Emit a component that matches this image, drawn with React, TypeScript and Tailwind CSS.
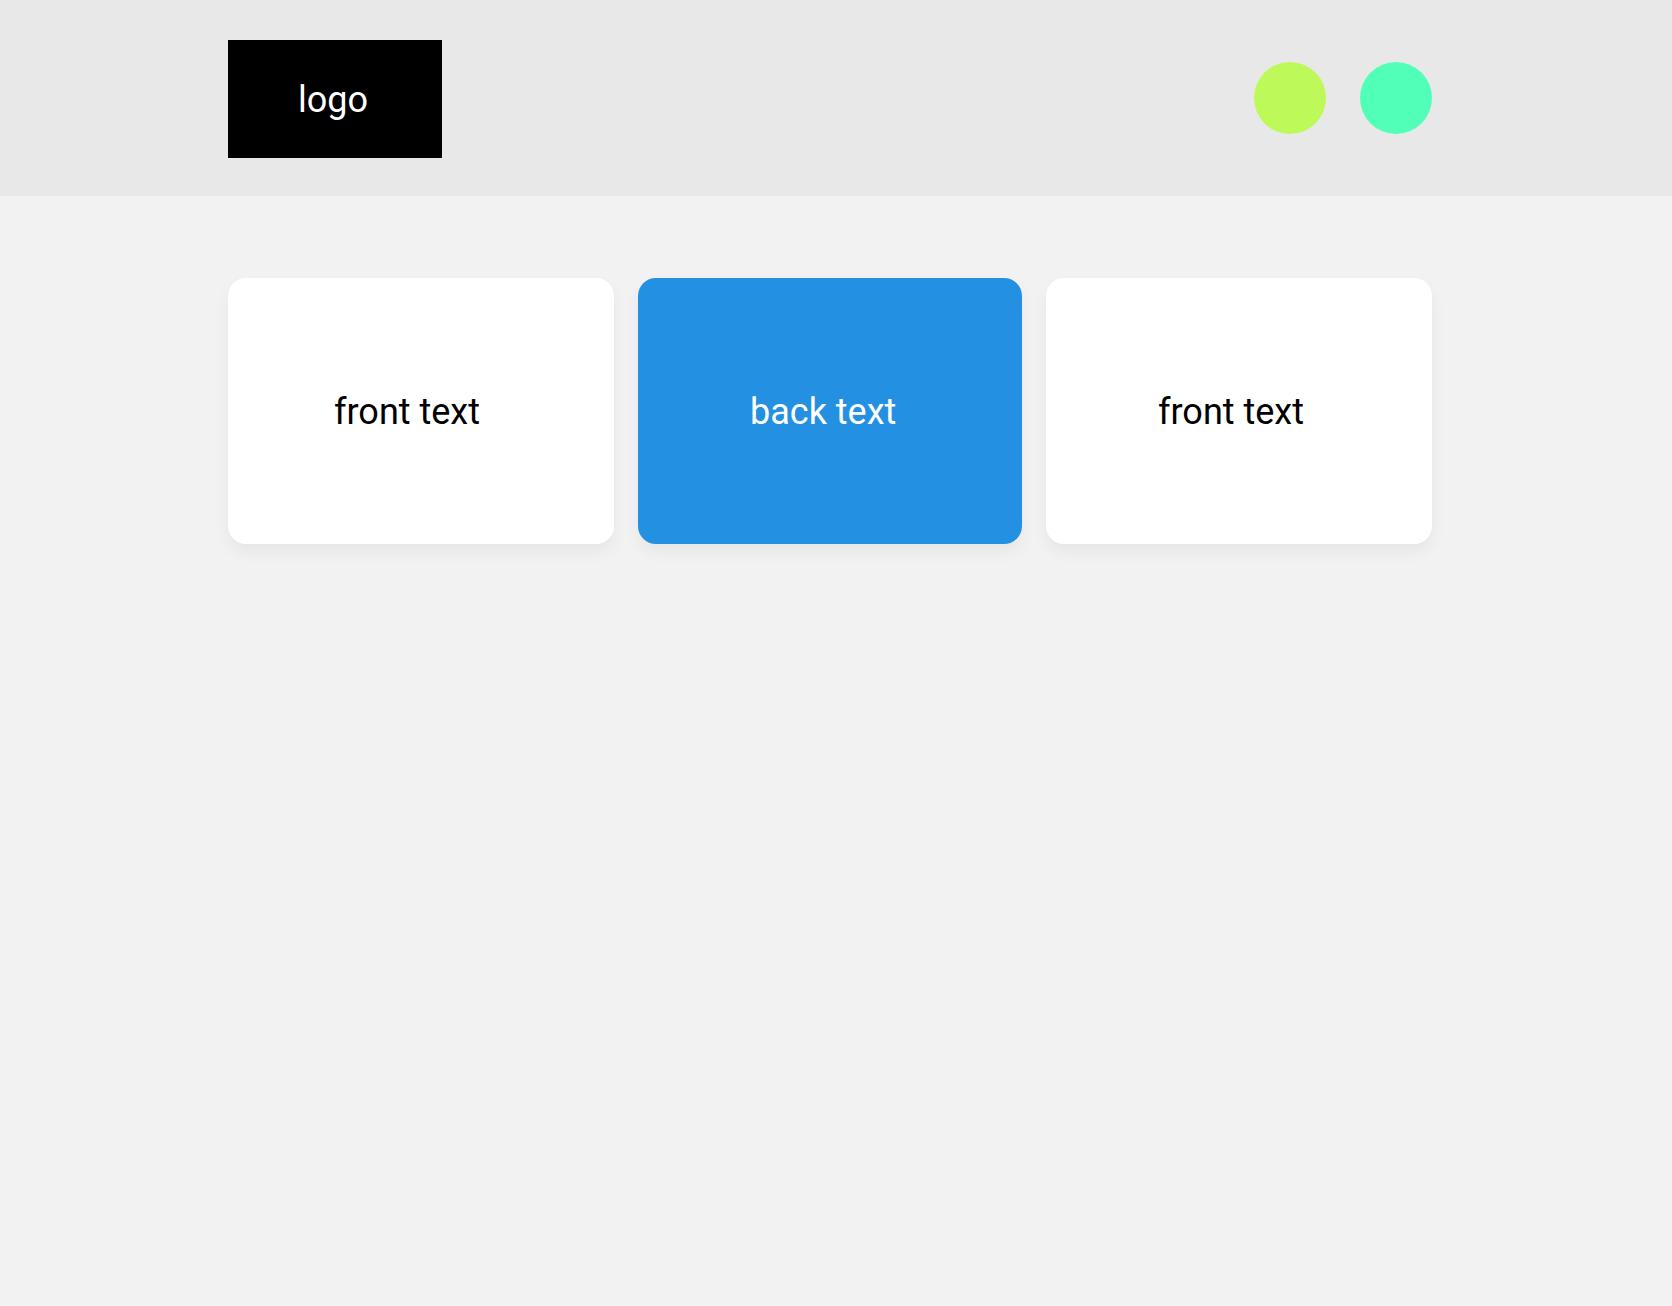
type CardProps = {
  text: string;
  className: string;
};

function Card({ text, className }: CardProps) {
  return (
    <article
      className={`flex min-h-[266px] items-center rounded-[18px] pt-0.5 shadow-[0_8px_16px_rgba(0,0,0,0.05)] ${className}`}
    >
      <p>{text}</p>
    </article>
  );
}

export default function App() {
  return (
    <div className="min-h-screen bg-[#f2f2f2] font-['Roboto',sans-serif] text-4xl text-black">
      <header className="flex items-start justify-between bg-[#e8e8e8] pt-10 pr-60 pb-[38px] pl-57">
        <a href="#" className="flex h-[118px] w-[214px] items-center bg-black pt-0.5 pl-[70px] text-white">
          logo
        </a>
        <nav className="flex gap-[34px] pt-[22px]">
          <button type="button" aria-label="Green" className="size-18 rounded-full bg-[#bdfa59]" />
          <button type="button" aria-label="Mint" className="size-18 rounded-full bg-[#52ffb8]" />
        </nav>
      </header>
      <main className="grid grid-cols-[386fr_384fr_386fr] gap-6 pt-[82px] pr-60 pb-10 pl-57">
        <Card text="front text" className="bg-white pl-[106px]" />
        <Card text="back text" className="bg-[#2490e2] pl-28 text-white" />
        <Card text="front text" className="bg-white pl-28" />
      </main>
    </div>
  );
}
